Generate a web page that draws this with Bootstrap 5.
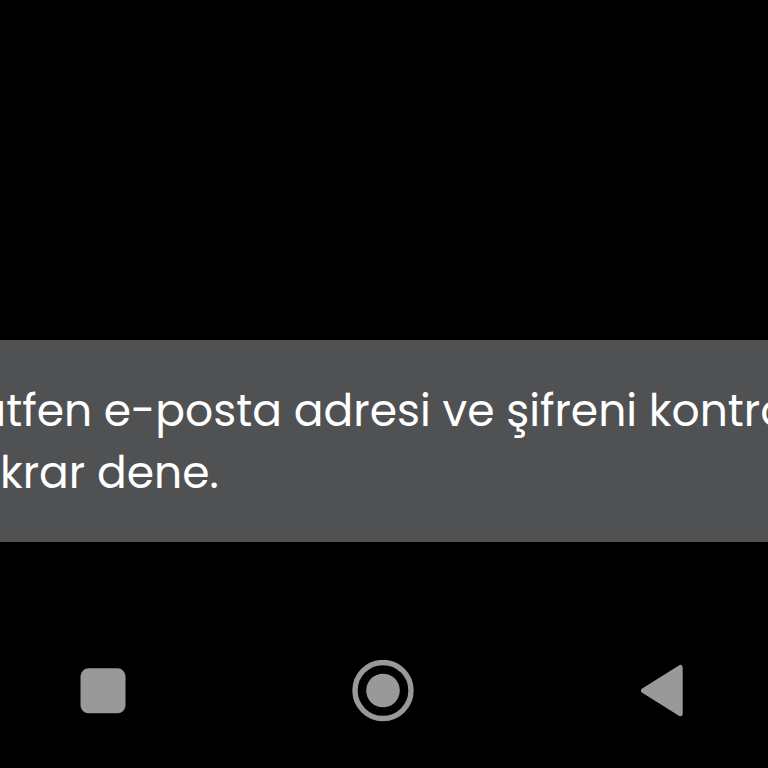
<!DOCTYPE html>
<html lang="tr">
<head>
<meta charset="utf-8">
<meta name="viewport" content="width=device-width, initial-scale=1">
<title>Giriş</title>
<link href="https://cdn.jsdelivr.net/npm/bootstrap@5.3.0/dist/css/bootstrap.min.css" rel="stylesheet">
<style>
body { background: #000; }
.snackbar {
  background: #505153;
  color: #fff;
  font-family: Poppins, Inter, "Open Sans", sans-serif;
  font-size: 44px;
  line-height: 62px;
  padding: 40px 0 38px;
}
/* The message runs past both edges of the screen */
.message-line { text-indent: -22px; }
.system-nav { padding: 118px 75px 46px 72px; }
.nav-key { width: 62px; height: 62px; color: #999; }
</style>
</head>
<body>
<div class="d-flex flex-column min-vh-100 overflow-hidden">
  <main class="flex-grow-1"></main>
  <div class="snackbar overflow-hidden text-nowrap" role="alert">
    <p class="message-line mb-0">ütfen e-posta adresi ve şifreni kontro</p>
    <p class="mb-0">krar dene.</p>
  </div>
  <nav class="system-nav d-flex justify-content-between" aria-label="Sistem">
    <button type="button" class="nav-key btn border-0 p-0 d-flex" aria-label="Son uygulamalar">
      <svg width="62" height="62" viewBox="0 0 62 62" fill="currentColor" aria-hidden="true"><rect x="8.5" y="8.3" width="45" height="45" rx="8"/></svg>
    </button>
    <button type="button" class="nav-key btn border-0 p-0 d-flex" aria-label="Ana ekran">
      <svg width="62" height="62" viewBox="0 0 62 62" fill="currentColor" aria-hidden="true"><circle cx="31" cy="30.5" r="28" fill="none" stroke="currentColor" stroke-width="5.4"/><circle cx="31" cy="30.5" r="16.8"/></svg>
    </button>
    <button type="button" class="nav-key btn border-0 p-0 d-flex" aria-label="Geri">
      <svg width="62" height="62" viewBox="0 0 62 62" fill="currentColor" stroke="currentColor" stroke-width="5" stroke-linejoin="round" aria-hidden="true"><path d="M12.5 30.7 49.2 7.5V53.7Z"/></svg>
    </button>
  </nav>
</div>
<script src="https://cdn.jsdelivr.net/npm/bootstrap@5.3.0/dist/js/bootstrap.bundle.min.js"></script>
</body>
</html>
